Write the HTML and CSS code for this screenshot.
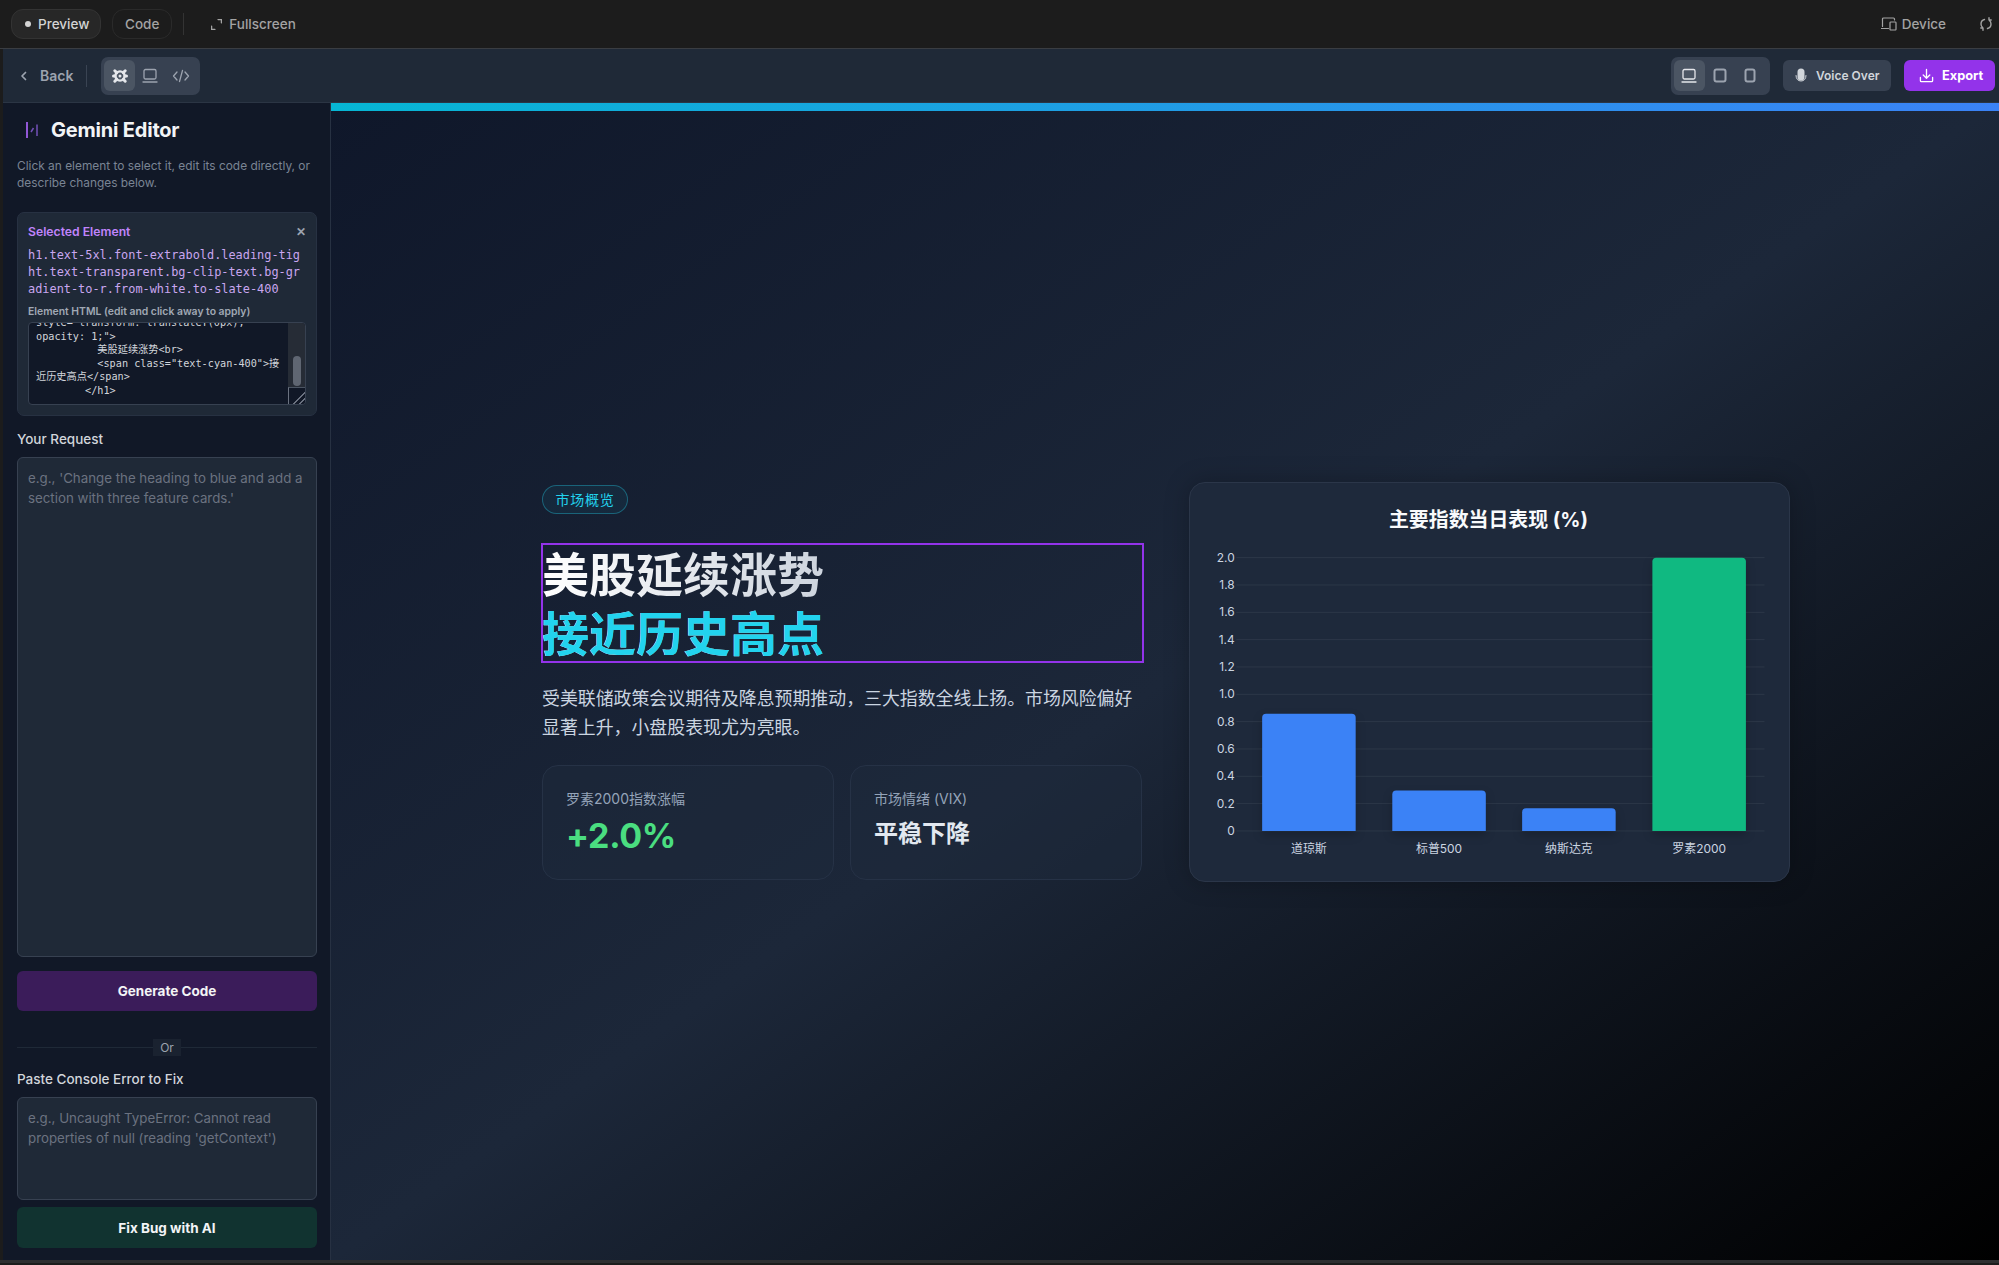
FILE: index.html
```html
<!DOCTYPE html>
<html lang="zh">
<head>
<meta charset="utf-8">
<title>Gemini Editor</title>
<link rel="stylesheet" href="styles.css">
</head>
<body>
<div class="app">
  <header class="topbar">
    <button class="tab tab-on"><span class="dot"></span>Preview</button>
    <button class="tab">Code</button>
    <span class="vline"></span>
    <span class="fullscreen">
      <svg class="ic10" viewBox="0 0 10 10"><path d="M.5 6.500V9.500H3.500M6.500 .5H9.500V3.500"/></svg>
      Fullscreen
    </span>
    <span class="grow"></span>
    <span class="device">
      <svg class="ic16" viewBox="0 0 16 14"><path d="M1.500 9.500V2a1 1 0 0 1 1-1h10a1 1 0 0 1 1 1v1M.5 11.500h7M9.800 5h4.400a.8.8 0 0 1 .8.8v6.400a.8.8 0 0 1-.8.8H9.800a.8.8 0 0 1-.8-.8V5.800a.8.8 0 0 1 .8-.8z"/></svg>
      Device
    </span>
    <svg class="refresh" viewBox="0 0 14 14"><path d="M5.500 2.500C3.500 3 2 4.800 2 7c0 1.400.6 2.700 1.600 3.500M1.800 11h2.200v2.200M8.500 11.500c2-.5 3.500-2.300 3.500-4.500 0-1.400-.6-2.700-1.600-3.500M12.200 3H10V.8"/></svg>
  </header>

  <nav class="toolbar">
    <span class="back">
      <svg class="ic12" viewBox="0 0 12 12"><path d="M7.500 2.500 4 6l3.500 3.500"/></svg>
      Back
    </span>
    <span class="vline vline-tool"></span>
    <div class="group">
      <span class="gbtn gbtn-on">
        <svg class="ic18 strong" viewBox="0 0 18 18"><circle cx="9" cy="9" r="4.600"/><path class="teeth" d="M3.800 3.800 5.800 5.800M14.200 3.800 12.200 5.800M3.800 14.200 5.800 12.200M14.200 14.200 12.200 12.200M2.500 9h1.500M14 9h1.500"/><circle class="fill" cx="9" cy="9" r="1.500"/></svg>
      </span>
      <span class="gbtn">
        <svg class="ic18" viewBox="0 0 18 18"><rect x="3" y="2.500" width="12" height="9.500" rx="1.500"/><path d="M2 15h14"/></svg>
      </span>
      <span class="gbtn">
        <svg class="ic18" viewBox="0 0 18 18"><path d="M5 5 1.500 9 5 13M13 5l3.500 4-3.500 4M10.500 3.500l-3 11"/></svg>
      </span>
    </div>
    <span class="grow"></span>
    <div class="group">
      <span class="gbtn gbtn-on">
        <svg class="ic18 bright" viewBox="0 0 18 18"><rect x="3" y="2.500" width="12" height="9.500" rx="1.500"/><path d="M2 15h14"/></svg>
      </span>
      <span class="gbtn">
        <svg class="ic18 thick" viewBox="0 0 18 18"><rect x="3.500" y="2.500" width="11" height="12" rx="2"/></svg>
      </span>
      <span class="gbtn">
        <svg class="ic18 thick" viewBox="0 0 18 18"><rect x="4.500" y="2.500" width="9" height="12" rx="2"/></svg>
      </span>
    </div>
    <button class="voice">
      <svg class="mic" viewBox="0 0 12 15"><rect class="fill" x="2.500" y="0.500" width="7" height="12" rx="3.500"/><path d="M1 7.500c0 3.500 2 5.500 5 5.500s5-2 5-5.500"/></svg>
      Voice Over
    </button>
    <button class="export">
      <svg class="ic16 white" viewBox="0 0 16 16"><path d="M1.500 10v3.500a1 1 0 0 0 1 1h11a1 1 0 0 0 1-1V10M8 1.500V10.500M4.500 7.500 8 11l3.500-3.500"/></svg>
      Export
    </button>
  </nav>

  <div class="body">
    <aside class="side">
      <h2 class="side-title">
        <svg class="logo" viewBox="0 0 16 18"><path d="M3 1V17"/><path class="logo-b" d="M9.500 7 7 11M13 3.500V15"/></svg>
        Gemini Editor
      </h2>
      <p class="side-desc">Click an element to select it, edit its code directly, or describe changes below.</p>

      <section class="sel">
        <div class="sel-head"><span>Selected Element</span><span class="close">✕</span></div>
        <div class="sel-path">h1.text-5xl.font-extrabold.leading-tight.text-transparent.bg-clip-text.bg-gradient-to-r.from-white.to-slate-400</div>
        <div class="sel-label">Element HTML (edit and click away to apply)</div>
        <div class="code">
          <pre class="code-text">style="transform: translateY(0px);
opacity: 1;"&gt;
          美股延续涨势&lt;br&gt;
          &lt;span class="text-cyan-400"&gt;接
近历史高点&lt;/span&gt;
        &lt;/h1&gt;</pre>
          <div class="scroll"><span class="thumb"></span><span class="grip"></span></div>
        </div>
      </section>

      <label class="flabel">Your Request</label>
      <div class="input input-big">e.g., 'Change the heading to blue and add a section with three feature cards.'</div>
      <button class="cta cta-purple">Generate Code</button>
      <div class="or"><span>Or</span></div>
      <label class="flabel">Paste Console Error to Fix</label>
      <div class="input input-small">e.g., Uncaught TypeError: Cannot read properties of null (reading 'getContext')</div>
      <button class="cta cta-green">Fix Bug with AI</button>
    </aside>

    <main class="stage">
      <div class="progress"></div>
      <div class="slide">
        <div class="left">
          <span class="pill">市场概览</span>
          <h1 class="headline">美股延续涨势<br><span class="cyan">接近历史高点</span></h1>
          <p class="lede">受美联储政策会议期待及降息预期推动，三大指数全线上扬。市场风险偏好显著上升，小盘股表现尤为亮眼。</p>
          <div class="stats">
            <div class="stat">
              <div class="stat-label">罗素2000指数涨幅</div>
              <div class="stat-big">+2.0%</div>
            </div>
            <div class="stat">
              <div class="stat-label">市场情绪 (VIX)</div>
              <div class="stat-mid">平稳下降</div>
            </div>
          </div>
        </div>
        <div class="chart-card">
          <svg class="chart" viewBox="0 0 600 400">
            <text class="c-title" x="299" y="44" text-anchor="middle">主要指数当日表现 (%)</text>
            <g class="grid">
              <path d="M46 75H576M46 102.500H576M46 130H576M46 157.400H576M46 184.900H576M46 212.400H576M46 239.800H576M46 267.300H576M46 294.800H576M46 322.200H576M46 349.700H576"/>
            </g>
            <g class="c-axis" text-anchor="end">
              <text x="44" y="79">2.0</text><text x="44" y="106.500">1.8</text><text x="44" y="134">1.6</text><text x="44" y="161.400">1.4</text><text x="44" y="188.900">1.2</text><text x="44" y="216.400">1.0</text><text x="44" y="243.800">0.8</text><text x="44" y="271.300">0.6</text><text x="44" y="298.800">0.4</text><text x="44" y="326.200">0.2</text><text x="44" y="353.700">0</text>
            </g>
            <path class="bar bar-blue" d="M71.500 349.700V236a4 4 0 0 1 4-4h86a4 4 0 0 1 4 4V349.700z"/>
            <path class="bar bar-blue" d="M202.300 349.700V313a4 4 0 0 1 4-4h86a4 4 0 0 1 4 4V349.700z"/>
            <path class="bar bar-blue" d="M332.800 349.700V331a4 4 0 0 1 4-4h86a4 4 0 0 1 4 4V349.700z"/>
            <path class="bar bar-green" d="M463.700 349.700V79a4 4 0 0 1 4-4h86a4 4 0 0 1 4 4V349.700z"/>
            <g class="c-axis" text-anchor="middle">
              <text x="118.500" y="372">道琼斯</text><text x="249.300" y="372">标普500</text><text x="379.800" y="372">纳斯达克</text><text x="510.700" y="372">罗素2000</text>
            </g>
          </svg>
        </div>
      </div>
    </main>
  </div>
  <div class="foot"></div>
</div>
</body>
</html>
```
FILE: styles.css
```css
* { box-sizing: border-box; }
html, body { margin: 0; height: 100%; background: #1c1c1c; }
body { font-family: Inter, "Noto Sans CJK SC", sans-serif; overflow: hidden; }
button { font-family: inherit; cursor: pointer; }
svg { display: block; fill: none; stroke: currentColor; stroke-linecap: round; stroke-linejoin: round; flex: none; }
.app { width: 1999px; height: 1265px; display: flex; flex-direction: column; }
.grow { flex: 1; }

.topbar { height: 49px; flex: none; background: #1c1c1c; border-bottom: 1px solid #3a3d42; display: flex; align-items: center; padding: 0 6px 0 11px; }
.tab { height: 30px; border-radius: 12px; border: 1px solid #2a2a2a; background: transparent; color: #a3a3a3; font-size: 13.500px; font-weight: 500; padding: 0 12px; display: flex; align-items: center; margin-right: 11px; }
.tab-on { background: #272727; border-color: #333; color: #d4d4d4; padding: 0 0 0 13px; width: 90px; }
.dot { width: 6px; height: 6px; flex: none; border-radius: 50%; background: #d4d4d4; margin-right: 7px; }
.vline { width: 1px; height: 22px; background: #333; }
.fullscreen { display: flex; align-items: center; gap: 7px; color: #a3a3a3; font-size: 13.500px; font-weight: 500; margin-left: 27px; }
.ic10 { width: 11px; height: 11px; stroke-width: 1.3; }
.device { display: flex; align-items: center; gap: 5px; color: #a3a3a3; font-size: 13.500px; font-weight: 500; margin-right: 33px; }
.ic16 { width: 16px; height: 14px; stroke-width: 1.2; }
.refresh { width: 14px; height: 14px; color: #a3a3a3; stroke-width: 1.4; }

.toolbar { height: 54px; flex: none; background: #1f2937; margin-left: 3px; display: flex; align-items: center; padding: 0 4px 0 15px; border-bottom: 1px solid #2b3544; }
.back { display: flex; align-items: center; gap: 10px; color: #9ca3af; font-size: 14px; font-weight: 600; }
.ic12 { width: 12px; height: 12px; stroke-width: 1.7; }
.vline-tool { background: #3a4453; margin: 0 14px 0 13px; }
.group { display: flex; align-items: center; background: #374151; border-radius: 7px; padding: 3px; height: 38px; width: 99px; }
.gbtn { width: 30.600px; height: 31px; border-radius: 6px; display: flex; align-items: center; justify-content: center; color: #9ca3af; }
.gbtn-on { background: #4b5563; color: #d1d5db; }
.ic18 { width: 18px; height: 18px; stroke-width: 1.3; }
.strong { stroke-width: 2.400; color: #e5e7eb; }
.teeth { stroke-width: 3; }
.bright { color: #e5e7eb; }
.thick { stroke-width: 2; }
.fill { fill: currentColor; stroke: none; }
.voice { height: 31px; width: 108px; margin-left: 13px; background: #374151; border: 0; border-radius: 6px; color: #d1d5db; font-size: 12px; font-weight: 600; display: flex; align-items: center; gap: 9px; padding: 0 0 0 12px; }
.mic { width: 12px; height: 15px; stroke-width: 1; }
.export { height: 31px; width: 91px; margin-left: 13px; background: #9333ea; border: 0; border-radius: 6px; color: #fff; font-size: 12.800px; font-weight: 700; display: flex; align-items: center; gap: 8px; padding: 0 0 0 15px; }
.white { width: 15px; height: 15px; stroke-width: 1.4; }

.body { flex: 1; min-height: 0; display: flex; margin-left: 3px; }
.foot { height: 5px; flex: none; background: linear-gradient(#2e2e30 60%, #1c1c1c 60%); }

.side { width: 328px; flex: none; background: #111827; border-right: 1px solid #273142; padding: 0 13px 0 14px; display: flex; flex-direction: column; }
.side-title { margin: 13px 0 0; display: flex; align-items: center; gap: 11px; color: #f3f4f6; font-size: 20px; font-weight: 700; line-height: 28px; letter-spacing: -0.2px; }
.logo { width: 16px; height: 18px; margin-left: 7px; color: #9157d6; stroke-width: 2; stroke-linecap: butt; }
.logo-b { stroke: #7350b8; stroke-width: 1.500; }
.side-desc { margin: 13px 0 0; color: #7a8494; font-size: 11.900px; line-height: 17px; }

.sel { margin-top: 21px; height: 204px; flex: none; background: #1f2937; border: 1px solid #273142; border-radius: 7px; padding: 12px 10px; }
.sel-head { display: flex; justify-content: space-between; align-items: center; color: #c084fc; font-size: 12.200px; font-weight: 600; line-height: 14px; }
.close { color: #9ca3af; font-size: 12px; font-weight: 700; }
.sel-path { margin-top: 8px; color: #c9a6f0; font-family: "DejaVu Sans Mono", monospace; font-size: 11.900px; line-height: 17px; word-break: break-all; }
.sel-label { margin-top: 7px; color: #a0a8b4; font-size: 10.400px; font-weight: 600; line-height: 14px; }
.code { position: relative; margin-top: 3px; height: 83px; background: #111827; border: 1px solid #374151; border-radius: 4px; overflow: hidden; }
.code-text { margin: -7px 0 0; padding: 0 24px 0 7px; color: #d1d5db; font-family: "DejaVu Sans Mono", "Noto Sans CJK SC", monospace; font-size: 10.200px; line-height: 13.600px; white-space: pre-wrap; word-break: break-all; }
.scroll { position: absolute; top: 0; right: 0; bottom: 0; width: 17px; background: #262c36; }
.thumb { position: absolute; left: 5px; top: 33px; width: 8px; height: 30px; border-radius: 4px; background: #5f6672; }
.grip { position: absolute; left: 0; bottom: 0; width: 17px; height: 17px; background: linear-gradient(135deg, #111827 62%, #6b7280 62%, #6b7280 68%, #111827 68%, #111827 80%, #6b7280 80%, #6b7280 86%, #111827 86%); border-top: 1px solid #4b5563; border-left: 1px solid #6b7280; }

.flabel { margin-top: 13px; color: #d1d5db; font-size: 13.500px; font-weight: 500; line-height: 20px; }
.input { margin-top: 8px; background: #1f2937; border: 1px solid #374151; border-radius: 6px; color: #6b7280; font-size: 13.300px; line-height: 20px; padding: 10px 10px; }
.input-big { height: 500px; flex: none; }
.input-small { height: 103px; flex: none; }
.cta { display: block; width: 100%; flex: none; border: 0; border-radius: 6px; color: #f3f4f6; font-size: 13.500px; font-weight: 700; }
.cta-purple { height: 40px; margin-top: 14px; background: #3b1c5a; }
.cta-green { height: 41px; margin-top: 7px; background: #113330; }
.or { margin-top: 28px; height: 17px; flex: none; display: flex; align-items: center; justify-content: center; background: linear-gradient(#1f2937, #1f2937) center / 100% 1px no-repeat; }
.or span { background: #1a2230; color: #9ca3af; font-size: 12px; line-height: 17px; padding: 0 7px; }

.stage { flex: 1; position: relative; background: linear-gradient(to bottom right, #0f172a, #1c2739 50%, #000); display: flex; align-items: center; justify-content: center; padding: 1px 0 0 2px; }
.progress { position: absolute; top: 0; left: 0; right: 0; height: 8px; background: linear-gradient(90deg, #06b6d4, #3b82f6); }
.slide { width: 1248px; display: grid; grid-template-columns: 600px 601px; gap: 47px; align-items: start; }
.left { display: flex; flex-direction: column; align-items: flex-start; padding-top: 3px; }
.pill { height: 29px; width: 86px; border: 1px solid rgba(34, 211, 238, .35); border-radius: 15px; background: rgba(34, 211, 238, .06); color: #22d3ee; font-size: 14px; line-height: 27px; text-align: center; letter-spacing: .7px; }
.headline { margin: 29px 0 0 -1px; width: 603px; height: 120px; outline: 2px solid #9333ea; outline-offset: -2px; font-size: 47px; font-weight: 700; line-height: 59px; padding: 2px 0 0 1px; color: transparent; background: linear-gradient(90deg, #fff, #94a3b8); -webkit-background-clip: text; background-clip: text; }
.cyan { color: #22d3ee; }
.lede { margin: 20.500px 0 0; width: 600px; color: #cbd5e1; font-size: 17.900px; line-height: 29.250px; }
.stats { margin-top: 23px; width: 600px; display: grid; grid-template-columns: 1fr 1fr; gap: 16px; }
.stat { height: 115px; background: rgba(30, 41, 59, .5); border: 1px solid #263246; border-radius: 16px; padding: 23px; }
.stat-label { color: #94a3b8; font-size: 14px; line-height: 20px; }
.stat-big { margin-top: 7px; color: #4ade80; font-size: 34px; font-weight: 700; line-height: 40px; letter-spacing: -.3px; }
.stat-mid { margin-top: 9px; color: #e2e8f0; font-size: 24px; font-weight: 700; line-height: 32px; }
.chart-card { height: 400px; background: #1e293b; border: 1px solid #2b3649; border-radius: 16px; box-shadow: 0 0 25px rgba(0, 0, 0, .25); overflow: hidden; }
.chart { width: 100%; height: 100%; stroke: none; }
.c-title { fill: #f8fafc; font-size: 20px; font-weight: 700; }
.grid path { stroke: #2c3748; stroke-width: 1; }
.c-axis { fill: #cbd5e1; font-size: 12px; }
.bar { filter: drop-shadow(0 4px 5px rgba(0, 0, 0, .2)); }
.bar-blue { fill: #3b82f6; }
.bar-green { fill: #10b981; }
```
